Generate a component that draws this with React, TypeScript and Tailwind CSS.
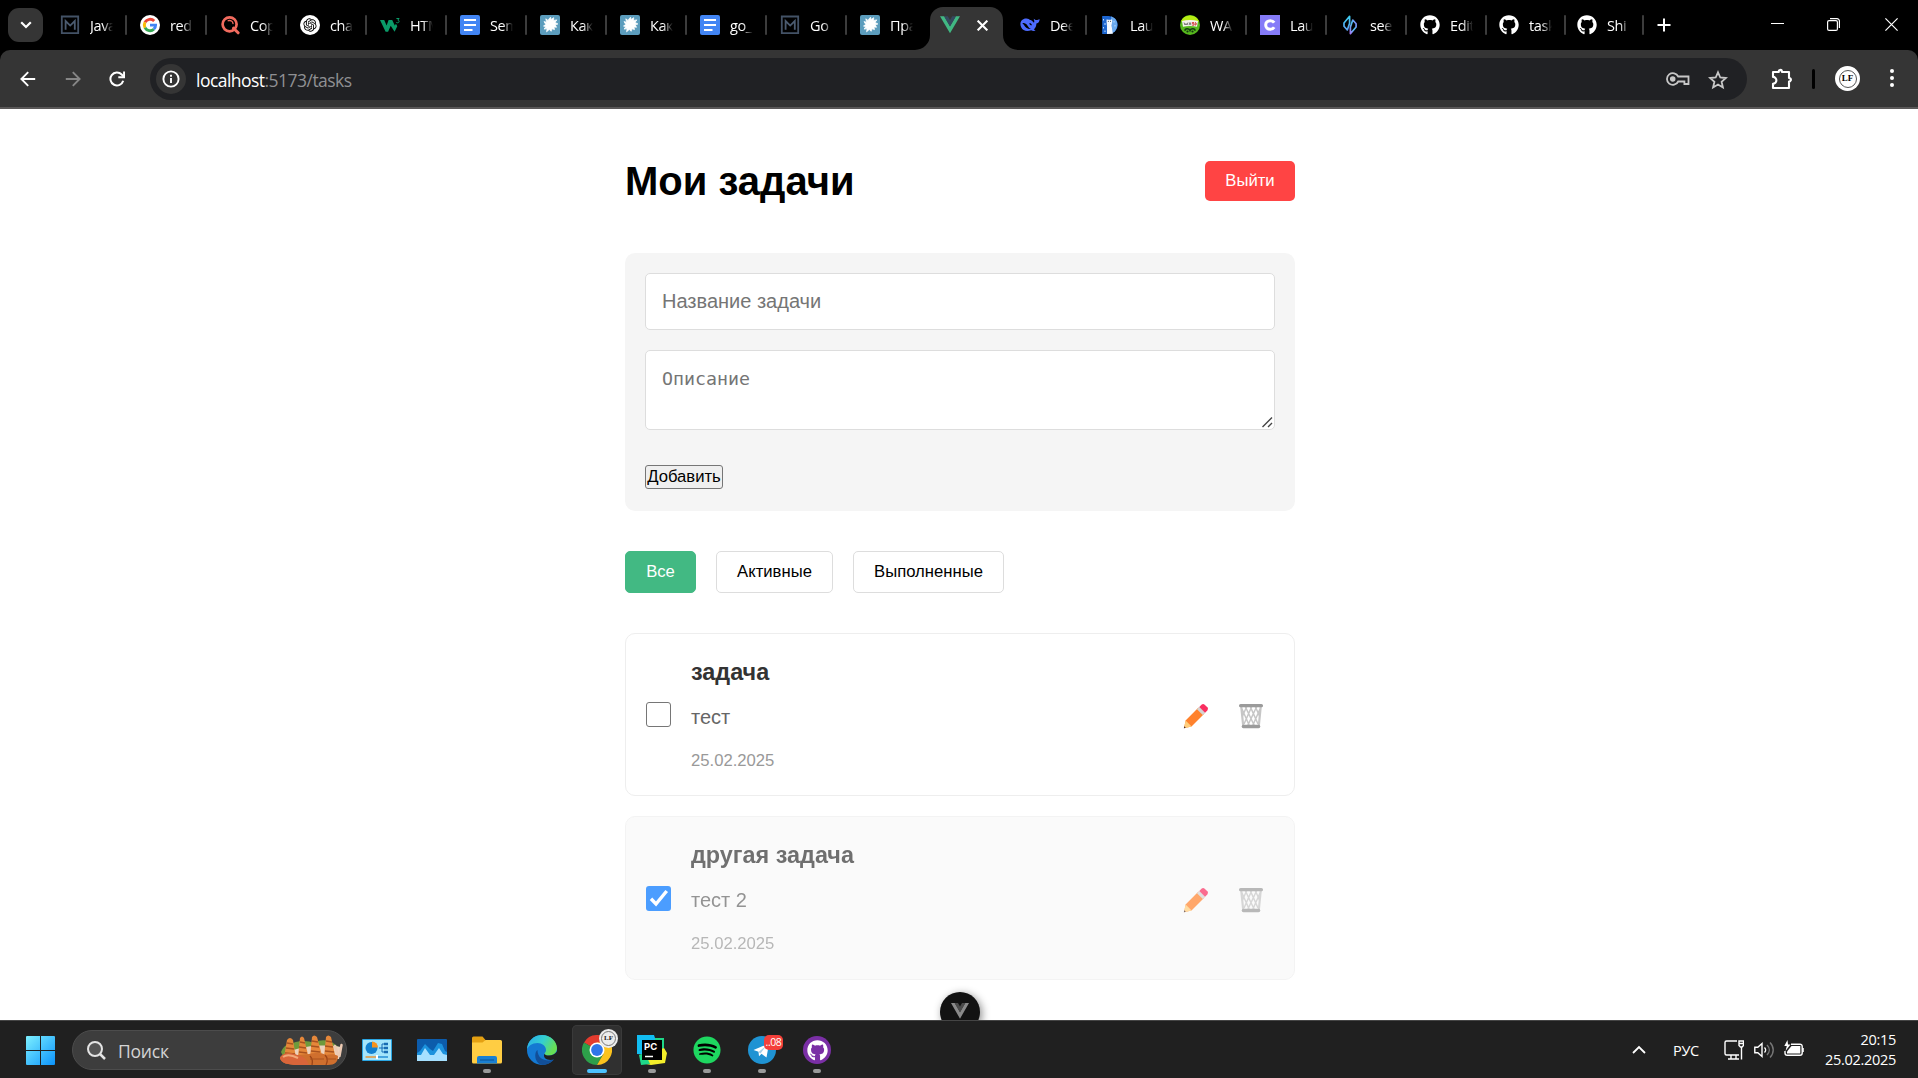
import React from 'react';
import { FaGithub, FaSpotify } from 'react-icons/fa';
import { RiOpenaiFill } from 'react-icons/ri';

function MIcon() {
  return (
    <svg viewBox="0 0 20 20" className="size-5">
      <path d="M1.8 1.5h16.4v16.7H1.8z" fill="none" stroke="#435266" strokeWidth="1.8" />
      <path d="M5.6 14.8V6l4.6 4.6L14.8 6v8.8" fill="none" stroke="#4b5b70" strokeWidth="1.8" />
    </svg>
  );
}

function GoogleIcon() {
  return (
    <svg viewBox="0 0 20 20" className="size-5">
      <circle cx="10" cy="10" r="10" fill="#fff" />
      <g fill="none" strokeWidth="2.9">
        <path d="M14.2 6.1A5.7 5.7 0 0 0 5 7.3" stroke="#ea4335" />
        <path d="M5 7.3a5.9 5.9 0 0 0 0 5.5" stroke="#fbbc05" />
        <path d="M5 12.8a5.7 5.7 0 0 0 8.8 1.4" stroke="#34a853" />
        <path d="M13.8 14.2a5.4 5.4 0 0 0 1.8-4.1H10" stroke="#4285f4" />
      </g>
    </svg>
  );
}

function CopyIcon() {
  return (
    <svg viewBox="0 0 20 20" className="size-5" fill="none" stroke="#f26b5e" strokeLinecap="round">
      <circle cx="9.6" cy="9.3" r="7" strokeWidth="2.7" />
      <path d="M13.5 13.2l4.6 4.6" strokeWidth="3" />
      <path d="M8.3 5.7c2.4-.8 4.5.6 4.7 2.8" strokeWidth="1.4" />
    </svg>
  );
}

function OpenAiIcon() {
  return (
    <span className="flex size-5 items-center justify-center rounded-full bg-white text-black">
      <RiOpenaiFill size={16} />
    </span>
  );
}

function W3Icon() {
  return (
    <svg viewBox="0 0 20 20" className="size-5">
      <path d="M0 5h4.2l2.4 5.4L8.600 5h3.600l2.600 5.600L16 8.800l1.300 2.400-2.700 5.600-3.900-6-2.600 6H5.600z" fill="#0a9b68" />
      <path d="M16.400 3.500h2.700l-1.300 1.600c1.800.1 1.700 2.700-.2 2.700-.8 0-1.200-.3-1.400-.8" fill="none" stroke="#0a9b68" strokeWidth="1" />
    </svg>
  );
}

function DocsIcon() {
  return (
    <svg viewBox="0 0 20 20" className="size-5">
      <rect width="20" height="20" rx="2" fill="#4285f4" />
      <path d="M4 5h12M4 10h12M4 15h8.5" stroke="#fff" strokeWidth="2.2" />
    </svg>
  );
}

function SplatIcon() {
  return (
    <svg viewBox="0 0 20 20" className="size-5">
      <rect width="20" height="20" rx="2" fill="#5c9dbd" />
      <path
        d="M9 4l1.500-1.800.6 2.300 2.600-1.800-.2 2.800 3.400-.6-1.900 2.500 2.900 1.600-2.700.7 1.300 2.600-2.600-.4.600 2.700-2.500-.9-.9 2.600-1.800-1.900-2.700 2.400.5-3.200-3 .5 1.700-2.400L3.500 11l2.300-1.500L4 6.600l2.600.6-.8-3.400L8 5.400z"
        fill="#fff"
        stroke="#fff"
        strokeWidth=".8"
      />
    </svg>
  );
}

function VueIcon() {
  return (
    <svg viewBox="0 0 20 20" className="size-5">
      <path d="M0 1.300h4.200L10 11.300 15.800 1.300H20L10 18.300z" fill="#41b883" />
      <path d="M4 1.300h3.800L10 5l2.200-3.700H16L10 11.600z" fill="#35495e" />
    </svg>
  );
}

function WhaleIcon() {
  return (
    <svg viewBox="0 0 20 20" className="size-5">
      <path
        d="M.4 9C.5 5.700 3.300 3.300 6.500 3.600c1.700.1 3 .9 3.400 1.300.9-.1 2 .4 3.200 2 .7.900 1.200 1 1.200-.1 0-1.300-.5-2-.5-3 .9.900 1.700 1.300 2.700 1.300 1.200-.1 1.900-.5 3-1.200.3 2.200-.8 4-3.100 4.600-.1 2.700-1 4.600-2.600 6 .8.400 1.500.5 1.700 1-1.200.8-3 .5-4.300-.2C6.700 16.900 2.700 15.700 1.300 12.500.7 11.300.4 10 .4 9z"
        fill="#4d6bfe"
      />
      <path d="M2.400 8.400c1.300-1 3.900.3 5.200 2.300 1 1.500 1.700 2.700 3.300 3.100-2.200.7-4.100-.3-5.400-1.700-1-1.100-1.500-2.700-3.100-3.700zM9.400 8c1.200-.2 2.400.9 2.600 2.300-.9-.1-1.700-.3-2.300-.9z" fill="#000" />
    </svg>
  );
}

function BearIcon() {
  return (
    <svg viewBox="0 0 20 20" className="size-5">
      <path d="M2.200 1h6.500a9 9 0 0 1 0 18H2.200z" fill="#1d66d0" />
      <path d="M11 1.600c4.200.9 6.400 4.500 6.300 8.400 0 3.500-1.800 6.700-4.800 8.100z" fill="#69a9ed" />
      <path d="M7 19v-7.500L6.500 6l.2-1.800 1.200.5h3l1.100-.5.2 2-.6 4.400 1.300 8.200z" fill="#f5f9ff" />
      <path d="M3.500 4v1.500M5 8v2M3.500 12v1.500M5 15.500V17M14 6v1.500M15 10v1.500" stroke="#bcdcff" />
      <circle cx="8.300" cy="6.300" r=".5" fill="#123" />
      <circle cx="10.500" cy="6.300" r=".5" fill="#123" />
    </svg>
  );
}

function WasdIcon() {
  return (
    <svg viewBox="0 0 20 20" className="size-5">
      <circle cx="10" cy="10" r="10" fill="#56b81d" />
      <path d="M.8 6.500A10 10 0 0 1 19.200 6.500z" fill="#b7ec13" />
      <path d="M2 6c5-1.200 11-1.200 16 0l-1 5.700c-4-.8-10-.8-14 0z" fill="#f5f3ee" />
      <path d="M4 7.500l1 2.500 1-1.500 1 1.500 1-2.500M9 10.200l1-2.700 1 2.700" fill="none" stroke="#555" strokeWidth=".8" />
      <path d="M14 7.500h-1.800v1.200H14v1.500h-2M15.200 7.500v2.700c1.600 0 1.600-2.700 0-2.700" fill="none" stroke="#c22" strokeWidth=".8" />
      <path d="M5 15.800c0-2.600 4-2.600 5-.3 1-2.300 5-2.300 5 .3" fill="none" stroke="#123b10" strokeWidth="1.600" />
      <circle cx="7.500" cy="16.500" r="1.100" fill="#143611" />
      <circle cx="12.500" cy="16.500" r="1.100" fill="#143611" />
    </svg>
  );
}

function CIcon() {
  return (
    <svg viewBox="0 0 20 20" className="size-5">
      <path d="M0 0h20v20H0z" fill="#857bf8" />
      <path d="M14.200 7.700C13.200 6.200 11.900 5.700 10.300 5.700c-2.800 0-4.600 1.700-4.600 4.300s1.800 4.300 4.600 4.300c1.600 0 3-.6 3.900-2" fill="none" stroke="#fff" strokeWidth="3" />
    </svg>
  );
}

function SeeIcon() {
  return (
    <svg viewBox="0 0 20 20" className="size-5" fill="none" strokeWidth="1.700" strokeLinejoin="round">
      <defs>
        <linearGradient id="see-left" x1="0" y1="0" x2="0" y2="1">
          <stop offset="0" stopColor="#3fd0f2" />
          <stop offset="1" stopColor="#5aa0f2" />
        </linearGradient>
        <linearGradient id="see-right" x1="1" y1="0" x2="0" y2="1">
          <stop offset="0" stopColor="#8f7bf7" />
          <stop offset=".5" stopColor="#4cc3ee" />
          <stop offset="1" stopColor="#a678f5" />
        </linearGradient>
      </defs>
      <path d="M9.600 1.300v7L7.300 15 4 11.300V8z" stroke="url(#see-left)" />
      <path d="M12.800 5l3.300 3.700V12l-5.700 6.700V12z" stroke="url(#see-right)" />
    </svg>
  );
}

const gh = <FaGithub size={20} color="#fff" />;

const leftTabs: [React.ReactNode, string][] = [
  [<MIcon />, 'Java'],
  [<GoogleIcon />, 'redi'],
  [<CopyIcon />, 'Copy'],
  [<OpenAiIcon />, 'chat'],
  [<W3Icon />, 'HTM'],
  [<DocsIcon />, 'Sem'],
  [<SplatIcon />, 'Как '],
  [<SplatIcon />, 'Как '],
  [<DocsIcon />, 'go_'],
  [<MIcon />, 'Go'],
  [<SplatIcon />, 'Пра'],
];

const rightTabs: [React.ReactNode, string, string][] = [
  [<WhaleIcon />, 'Dee', 'w-20'],
  [<BearIcon />, 'Lau', 'w-20'],
  [<WasdIcon />, 'WA', 'w-20'],
  [<CIcon />, 'Lau', 'w-20'],
  [<SeeIcon />, 'see', 'w-20'],
  [gh, 'Edit', 'w-[79px]'],
  [gh, 'task', 'w-[78px]'],
  [gh, 'Shi', 'w-[78px]'],
];

function Tab({ icon, label, width = 'w-20', line = true }: { icon: React.ReactNode; label: string; width?: string; line?: boolean }) {
  return (
    <div className={`flex h-[50px] shrink-0 items-center pl-2.5 ${width}`}>
      <div className="size-5 shrink-0">{icon}</div>
      <div className="ml-2.5 mt-px w-[23px] shrink-0 overflow-hidden whitespace-nowrap text-[14.5px] leading-5 tracking-[-0.4px] text-white [mask-image:linear-gradient(to_right,black_55%,transparent)]">
        {label}
      </div>
      {line && <div className="ml-3 h-5 w-0.5 shrink-0 rounded-full bg-[#3c3c3c]" />}
    </div>
  );
}

function TabStrip() {
  return (
    <div className="flex h-[50px] bg-black">
      <div className="ml-2 mt-2 mr-[7px] flex h-[34px] w-[35px] items-center justify-center rounded-[11px] bg-[#353535]">
        <svg viewBox="0 0 12 8" className="h-2 w-3" fill="none" stroke="#fff" strokeWidth="2.200">
          <path d="M1.200 1.200L6 6l4.800-4.800" />
        </svg>
      </div>
      {leftTabs.map(([icon, label], i) => (
        <Tab key={i} icon={icon} label={label} line={i < leftTabs.length - 1} />
      ))}
      <div className="relative mr-[7px] mt-[7px] flex h-[43px] w-[73px] rounded-t-[13px] bg-[#353535] pl-2.5 pt-2">
        <svg viewBox="0 0 15 15" className="absolute -left-[15px] bottom-0 size-[15px]">
          <path d="M15 0v15H0A15 15 0 0 0 15 0z" fill="#353535" />
        </svg>
        <svg viewBox="0 0 15 15" className="absolute -right-[15px] bottom-0 size-[15px]">
          <path d="M0 0v15h15A15 15 0 0 1 0 0z" fill="#353535" />
        </svg>
        <VueIcon />
        <svg viewBox="0 0 10 10" className="ml-[17px] mt-[4.5px] size-[11px]" stroke="#fff" strokeWidth="1.900">
          <path d="M.6.600l8.800 8.800M9.400.600L.6 9.400" />
        </svg>
      </div>
      {rightTabs.map(([icon, label, width], i) => (
        <Tab key={i} icon={icon} label={label} width={width} />
      ))}
      <svg viewBox="0 0 14 14" className="ml-3 mt-[18px] size-3.5" stroke="#fff" strokeWidth="2">
        <path d="M7 .5v13M.5 7h13" />
      </svg>
      <div className="ml-auto mr-5 mt-[18px] flex">
        <svg viewBox="0 0 13 13" className="mr-[43px] size-[13px]" stroke="#fff">
          <path d="M0 5.500h13" />
        </svg>
        <svg viewBox="0 0 13 13" className="mr-[45px] size-[13px]" fill="none" stroke="#fff" strokeWidth="1.200">
          <rect x=".6" y="2.600" width="9.800" height="9.800" rx="1.500" />
          <path d="M3 .6h7a2.400 2.400 0 0 1 2.400 2.400v7" />
        </svg>
        <svg viewBox="0 0 13 13" className="size-[13px]" stroke="#fff" strokeWidth="1.200">
          <path d="M.4.400l12.200 12.200M12.600.400L.4 12.600" />
        </svg>
      </div>
    </div>
  );
}

function Toolbar() {
  return (
    <div className="bg-black">
      <div className="flex h-[59px] items-start rounded-t-[10px] border-b-2 border-[#5a5858] bg-[#353535] pt-2">
        <svg viewBox="0 0 16 16" className="ml-5 mt-[13px] size-4" fill="none" stroke="#fff" strokeWidth="1.900">
          <path d="M15.200 8H1.800M8.200 1.200L1.400 8l6.800 6.800" />
        </svg>
        <svg viewBox="0 0 16 16" className="ml-[29px] mt-[13px] size-4" fill="none" stroke="#868686" strokeWidth="1.900">
          <path d="M.8 8h13.400M7.800 1.200L14.600 8l-6.800 6.800" />
        </svg>
        <svg viewBox="0 0 16 16" className="ml-[28px] mr-px mt-[12.5px] size-4" fill="none" stroke="#fff" strokeWidth="2">
          <path d="M14.200 9.700A6.500 6.500 0 1 1 12.700 3.500l2 2.200" />
          <path d="M15.100.5v5.800H9.300" />
        </svg>
        <div className="ml-6 flex h-[42px] w-[1597px] items-center rounded-full bg-[#202124] pl-1.5">
          <div className="flex size-[30px] items-center justify-center rounded-full bg-[#353535]">
            <svg viewBox="0 0 18 18" className="size-[18px]" fill="none" stroke="#fff" strokeWidth="1.900">
              <circle cx="9" cy="9" r="7.600" />
              <path d="M9 8v5M9 4.800v1.900" />
            </svg>
          </div>
          <div className="ml-[10px] mt-px text-[17.5px] leading-[24px] tracking-[-0.53px] text-[#8f9093]">
            <span className="text-white">localhost</span>:5173/tasks
          </div>
          <svg viewBox="0 0 24 14" className="ml-auto h-3.5 w-6" fill="none" stroke="#c7c7c7" strokeWidth="1.800">
            <path d="M12.200 4.500H22.500v7.500h-4.100V9.500h-6.200A5.900 5.900 0 1 1 12.200 4.500z" />
            <circle cx="6.700" cy="7" r="1.900" fill="#c7c7c7" />
          </svg>
          <svg viewBox="0 0 20 20" className="ml-[18px] mr-[19px] mt-px size-5" fill="none" stroke="#c7c7c7" strokeWidth="1.800">
            <path d="M10 2.300l2.300 5.200 5.600.5-4.300 3.800 1.300 5.600L10 14.500l-4.900 2.900 1.300-5.600L2.100 8l5.600-.5z" />
          </svg>
        </div>
        <svg viewBox="0 0 22 22" className="ml-6 mt-2.5 size-[22px]" fill="none" stroke="#fff" strokeWidth="2.100" strokeLinejoin="round">
          <path d="M2 4h5.800a1.600 1.600 0 0 1 3.200-.8V4H18v6a1.700 1.700 0 0 1 0 3.600V20H2v-4.300a3.400 3.400 0 0 0 0-6.800z" />
          <path d="M9.400 1.700v1.500M19.500 11.800h1" />
        </svg>
        <div className="ml-[19px] mt-[11px] h-5 w-[3px] rounded-full bg-black" />
        <div className="ml-[20px] mt-2 flex size-[25px] items-center justify-center rounded-full bg-white">
          <div className="flex size-[18px] items-center justify-center rounded-full border border-[#555] font-['Liberation_Serif',serif] text-[9px] font-bold leading-none text-black">LF</div>
        </div>
        <div className="ml-[30px] mt-[11px] flex flex-col gap-[3px]">
          <i className="size-1 rounded-full bg-white" />
          <i className="size-1 rounded-full bg-white" />
          <i className="size-1 rounded-full bg-white" />
        </div>
      </div>
    </div>
  );
}

function Pencil() {
  return (
    <svg viewBox="0 0 26 26" className="size-[26px]">
      <path d="M15.500 4.500L21.500 10.500 8.500 23.500 1 25.200 2.600 17.500z" fill="#ff822d" />
      <path d="M2.600 17.500l6 6L1 25.200z" fill="#ffce7c" />
      <path d="M1.300 23.300l1.500 1.500-2 .5z" fill="#402a32" />
      <path d="M14 6.200l2.500-2.500 5.800 5.800-2.500 2.500z" fill="#d3d3d3" />
      <path d="M16.300 3.900l2.200-2.200a2.300 2.300 0 0 1 3.200 0l2.600 2.600a2.300 2.300 0 0 1 0 3.200l-2.200 2.200z" fill="#f92f60" />
    </svg>
  );
}

function Basket() {
  return (
    <svg viewBox="0 0 24 26" className="h-[26px] w-6">
      <g fill="none" stroke="#c6c6c6" strokeWidth="1.500">
        <path d="M2.200 3l2 20M21.800 3l-2 20" strokeWidth="2.200" />
        <path d="M3 6l7.500 17M6 3l9.500 20M11 3l8 18M16 3l4.500 10M21 6l-7.500 17M18 3L8.500 23M13 3L5 21M8 3L3.500 13" />
      </g>
      <rect x="0" y="1" width="24" height="3.300" rx="1.600" fill="#9b9b9b" />
      <rect x="2.700" y="21.800" width="18.600" height="3.500" rx="1.700" fill="#9b9b9b" />
    </svg>
  );
}

function TaskCard({ title, text, date, done = false }: { title: string; text: string; date: string; done?: boolean }) {
  return (
    <div className={`flex items-center rounded-[10px] border border-[#eee] px-5 ${done ? 'h-[164px] bg-[#f9f9f9] opacity-70' : 'h-[163px]'}`}>
      {done ? (
        <div className="flex size-[25px] items-center justify-center rounded-[3px] bg-[#0075ff]">
          <svg viewBox="0 0 20 20" className="size-5" fill="none" stroke="#fff" strokeWidth="3.400">
            <path d="M2 10.800l5 5.200L17.700 3" />
          </svg>
        </div>
      ) : (
        <div className="size-[25px] rounded-[3px] border border-[#767676] bg-white" />
      )}
      <div className="ml-5 h-28">
        <h3 className="-mt-px text-[23.4px] font-bold leading-7 text-[#333]">{title}</h3>
        <p className="mt-[19px] text-[20px] leading-6 text-[#666]">{text}</p>
        <p className="mt-[22px] text-[16.67px] leading-5 text-[#999]">{date}</p>
      </div>
      <div className="ml-auto mr-[11px] mt-[3px] flex gap-[30px]">
        <Pencil />
        <Basket />
      </div>
    </div>
  );
}

function TasksPage() {
  return (
    <main className="flex h-[911px] flex-col items-center overflow-hidden bg-white font-['Liberation_Sans',Arial,sans-serif] text-black">
      <div className="ml-[2px] h-[871px] w-[670px] shrink-0">
        <div className="flex h-[144px] items-start justify-between pt-[49px]">
          <h1 className="text-[40px] font-bold leading-[46px]">Мои задачи</h1>
          <button className="mt-[3px] flex h-10 w-[90px] justify-center rounded-[5px] bg-[#ff4444] pt-[10px] text-[16.67px] leading-5 text-white">Выйти</button>
        </div>
        <div className="h-[258px] rounded-[10px] bg-[#f5f5f5] p-5">
          <div className="h-[57px] rounded-[5px] border border-[#ddd] bg-white px-4 pt-[15px] text-[20px] leading-6 text-[#757575]">Название задачи</div>
          <div className="mt-5 flex h-20 justify-between rounded-[5px] border border-[#ddd] bg-white pl-4 text-[#757575]">
            <div className="pt-4 font-['DejaVu_Sans_Mono',monospace] text-[18.27px] leading-6">Описание</div>
            <svg viewBox="0 0 12 12" className="mb-px mr-px size-3 self-end" stroke="#444" strokeWidth="1.400">
              <path d="M1.500 11L11 1.500M7 11l4-4" />
            </svg>
          </div>
          <button className="mt-[35px] flex h-6 w-[78px] justify-center rounded-[3px] border border-[#767676] bg-[#efefef] text-[16.67px] leading-[21px]">Добавить</button>
        </div>
        <div className="mt-10 flex h-[42px] gap-5 text-[16.67px] leading-10">
          <button className="flex w-[71px] justify-center rounded-[5px] border border-[#42b983] bg-[#42b983] text-white">Все</button>
          <button className="flex w-[117px] justify-center rounded-[5px] border border-[#ddd]">Активные</button>
          <button className="flex w-[151px] justify-center rounded-[5px] border border-[#ddd]">Выполненные</button>
        </div>
        <div className="mt-10 flex flex-col gap-5">
          <TaskCard title="задача" text="тест" date="25.02.2025" />
          <TaskCard title="другая задача" text="тест 2" date="25.02.2025" done />
        </div>
      </div>
      <div className="ml-[2px] mt-3 flex size-10 shrink-0 justify-center rounded-full bg-[#121212] pt-[11px] shadow-[2px_2px_8px_rgba(0,0,0,0.45)]">
        <svg viewBox="0 0 18 16" className="h-4 w-[18px]">
          <path d="M0 0h3.800L9 9l5.200-9H18L9 15.700z" fill="#8a8a8a" />
          <path d="M3.600 0H7l2 3.400L11 0h3.400L9 9.400z" fill="#4b4b4b" />
        </svg>
      </div>
    </main>
  );
}

const spires = [
  'M5 22L8 5Q11 1 14 5L17 23z',
  'M19 22L21 3Q23 0 25 3L30 24H19z',
  'M31 22L33 2Q35-1 38 2L44 24H31z',
  'M45 22L47 2Q49-1 52 2L57 24H44z',
];

const bands = [
  'M8 8l6 1M7 13l8 1M6 18l10 1',
  'M21 7l5 1M20 12l7 1M20 17l8 1',
  'M33 6l6 1M32 11l8 1M32 16l9 1',
  'M47 6l6 1M46 11l8 1M46 16l9 1',
];

function Croissants() {
  return (
    <svg viewBox="0 0 64 31" className="h-[31px] w-16">
      <path d="M2 17c2-5 6-9 12-9 8-3 16-2 21 0 7-4 14-3 19 0l7 5-2 10H5z" fill="#6f9a3c" />
      <path d="M12 16c12-5 33-7 50-4l-2 12H12z" fill="#ecd2bd" />
      <path d="M62.500 10l-2 11M56 11l3 9" stroke="#eccab3" strokeWidth="2.500" strokeLinecap="round" />
      {spires.map((d, i) => (
        <g key={i}>
          <path d={d} fill="#e5873a" />
          <path d={bands[i]} stroke="#a8521f" strokeWidth="1.400" />
        </g>
      ))}
      <path d="M1 23c2-5 10-6 17-3l12-1c8-2 14-1 17 1 5-1 9-1 12 1 0 6-3 9-10 9H19C9 30 2 28 1 23z" fill="#cf6f2e" />
      <path d="M1 23c2-5 10-6 17-3 6 1 11 5 12 10H19C9 30 2 28 1 23z" fill="#d9653a" />
      <path d="M4 22c4-3 9-2 15 1" stroke="#f2a878" strokeWidth="2" fill="none" />
      <path d="M31 21c2 2 3 5 2 9M46 20c2 2 3 6 1 10" stroke="#9c4417" strokeWidth="1.300" fill="none" />
      <path d="M31 24h14M47 24h10" stroke="#a8521f" />
    </svg>
  );
}

function ChromeIcon() {
  return (
    <svg viewBox="0 0 30 30" className="size-[30px]">
      <path d="M15 15L2 7.500A15 15 0 0 1 28 7.500z" fill="#e33b2e" />
      <path d="M15 15l6.500 3.800L15 30A15 15 0 0 1 2 7.500z" fill="#2da04a" />
      <path d="M15 15V7.500h13A15 15 0 0 1 15 30l6.500-11.200z" fill="#fcc31e" />
      <circle cx="15" cy="15" r="7.500" fill="#fff" />
      <circle cx="15" cy="15" r="5.900" fill="#2f75e8" />
    </svg>
  );
}

function AppSlot({ children, open = false, active = false }: { children: React.ReactNode; open?: boolean; active?: boolean }) {
  return (
    <div className={`flex h-[50px] w-[50px] shrink-0 flex-col items-center rounded-[5px] ${active ? 'bg-[#303030] shadow-[inset_0_0_0_1px_#3a3a3a]' : ''}`}>
      <div className="relative mt-2.5 flex size-[30px] items-center justify-center">{children}</div>
      {open && <div className={`mt-1 h-1 rounded-full ${active ? 'w-5 bg-[#4cc2ff]' : 'w-2 bg-[#9a9a9a]'}`} />}
    </div>
  );
}

function Taskbar() {
  return (
    <div className="flex h-[58px] items-start border-t border-[#454545] bg-[#202020] text-white">
      <svg viewBox="0 0 29 29" className="ml-[26px] mt-[15px] size-[29px]">
        <defs>
          <linearGradient id="win" x1="0" y1="0" x2="1" y2="1">
            <stop offset="0" stopColor="#7df0ff" />
            <stop offset="1" stopColor="#0c93fb" />
          </linearGradient>
        </defs>
        <path d="M1 0h13v14H0V1a1 1 0 0 1 1-1zM15 0h13a1 1 0 0 1 1 1v13H15zM0 15h14v14H1a1 1 0 0 1-1-1zM15 15h14v13a1 1 0 0 1-1 1H15z" fill="url(#win)" />
      </svg>
      <div className="ml-[17px] mt-[9px] flex h-10 w-[275px] items-center rounded-full border border-[#4c4c4c] bg-[#3d3d3d] pl-3.5">
        <svg viewBox="0 0 19 19" className="size-[19px]" fill="none" stroke="#e4e4e4" strokeWidth="2">
          <circle cx="8" cy="8" r="7" fill="#555" />
          <path d="M13 13l5 5" strokeWidth="2.500" />
        </svg>
        <div className="ml-3 mt-px text-[17.5px] leading-6 tracking-[-0.2px] text-[#d4d4d4]">Поиск</div>
        <div className="ml-auto mr-[3px]"><Croissants /></div>
      </div>
      <div className="ml-[5px] mt-1 flex gap-[5px]">
        <AppSlot>
          <svg viewBox="0 0 30 22" className="h-[22px] w-[30px]">
            <rect width="30" height="22" rx="1" fill="#2aa5e2" />
            <rect x="1" y="1" width="28" height="20" fill="#a5e5fb" />
            <circle cx="9.500" cy="9" r="6" fill="#1280cf" />
            <path d="M10 8.500V2.500a6 6 0 0 1 6 6z" fill="#f7931e" />
            <path d="M17 9h5M20 5v8M20 5h4M20 13h4" stroke="#176bb3" />
            <path d="M22 5h4M22 9h4M22 13h4" stroke="#176bb3" strokeWidth="2.500" />
            <path d="M3.500 18H14" stroke="#f08a1d" strokeWidth="1.300" />
            <path d="M16 18h10" stroke="#1280cf" strokeWidth="1.300" />
            <path d="M15 16v4" stroke="#fff" strokeWidth="2" />
          </svg>
        </AppSlot>
        <AppSlot>
          <svg viewBox="0 0 30 22" className="h-[22px] w-[30px]">
            <rect width="30" height="22" rx="1" fill="#0c5cac" />
            <path d="M0 14l3-2 5-7 5 5 3 2 5-8 4 1 3 7 2 1v9H0z" fill="#1c92dd" />
            <path d="M0 16h4l4-7 5 7h4l5-7 4 6 4 1v6H0z" fill="#a6e0ff" />
          </svg>
        </AppSlot>
        <AppSlot open>
          <svg viewBox="0 0 30 28" className="h-7 w-[30px]">
            <path d="M0 2a1.500 1.500 0 0 1 1.500-1.500h9L13.500 4v5H0z" fill="#e4a012" />
            <path d="M0 6.500h10.500L13.500 4H28.500a1.500 1.500 0 0 1 1.500 1.500V26a1.500 1.500 0 0 1-1.500 1.500h-27A1.500 1.500 0 0 1 0 26z" fill="#ffcd43" />
            <path d="M5 27.500V22a2 2 0 0 1 2-2h16a2 2 0 0 1 2 2v5.500z" fill="#1a80d2" />
            <path d="M8 24h14" stroke="#0b5294" />
          </svg>
        </AppSlot>
        <AppSlot>
          <svg viewBox="0 0 30 30" className="size-[30px]">
            <defs>
              <linearGradient id="edge" x1="0" y1="0" x2="1" y2=".4">
                <stop offset="0" stopColor="#28a9ec" />
                <stop offset=".55" stopColor="#34cfd0" />
                <stop offset="1" stopColor="#67df55" />
              </linearGradient>
            </defs>
            <circle cx="15" cy="15" r="15" fill="#1479d2" />
            <path d="M0 15C0 6 7 0 15 0c9 0 15 7 15 13 0 5-4 7.500-8 7.500-3 0-4.500-1-4.500-1.800 0-.9 1.500-1.500 1.500-3.700C19 11 15 8 10.500 8 5 8 1 11 0 15z" fill="url(#edge)" />
            <path d="M10.500 15c0 7 5 10.500 11 10.500 2.500 0 5-1 6-2C25 27.500 20 30 16 30 7 29 7 17 10.500 15z" fill="#124f98" />
            <path d="M17.500 18.700c0 .8 1.500 1.800 4.500 1.800 3 0 6-1.300 8-4v5l-2 2.500c-6 2.500-13-.5-10.500-5.300z" fill="#202020" />
          </svg>
        </AppSlot>
        <AppSlot open active>
          <ChromeIcon />
          <div className="absolute -right-[6px] -top-[6px] flex size-[19px] items-center justify-center rounded-full bg-[#ececec]">
            <div className="flex size-[15px] items-center justify-center rounded-full border border-[#777] font-['Liberation_Serif',serif] text-[7px] font-bold leading-none text-[#222]">LF</div>
          </div>
        </AppSlot>
        <AppSlot open>
          <svg viewBox="0 0 30 30" className="size-[30px]">
            <path d="M0 0h17l1 3h9v9L12 20l-12-1z" fill="#12bdf2" />
            <path d="M18 3h9v10l-8 7z" fill="#1fd789" />
            <path d="M27 13l3 5-2 10-14 2-10-2 6-9z" fill="#f4ee2a" />
            <path d="M2 20l6-2 5 11-9 1z" fill="#1fd789" />
            <path d="M5 5h20v20H5z" fill="#000" />
            <path d="M8 21.500h8" stroke="#fff" strokeWidth="1.500" />
          </svg>
          <div className="absolute left-[7px] top-[6px] font-['Inter',sans-serif] text-[9.5px] font-bold leading-3 text-white">PC</div>
        </AppSlot>
        <AppSlot open>
          <span className="flex size-6 items-center justify-center rounded-full bg-black"><FaSpotify size={28} color="#1ed760" className="shrink-0" /></span>
        </AppSlot>
        <AppSlot open>
          <svg viewBox="0 0 28 28" className="size-7">
            <circle cx="14" cy="14" r="14" fill="#1f93d3" />
            <path d="M5.500 14L21 7.500l-2.500 14-5-3.700-2.500 2.500-.5-4.500z" fill="#fff" />
            <path d="M10.500 16l7.500-6-5.500 7.500" fill="#a9cfe6" />
          </svg>
          <div className="absolute -right-[6px] top-0 flex h-[15px] w-[19px] items-center justify-center rounded-[5px] bg-[#f43f3a] text-[10.5px] leading-none tracking-[-0.4px]">..08</div>
        </AppSlot>
        <AppSlot open>
          <span className="flex size-7 items-center justify-center rounded-full bg-[#7a2fa5]"><FaGithub size={21} color="#fff" /></span>
        </AppSlot>
      </div>
      <svg viewBox="0 0 14 9" className="ml-auto mt-6 h-[9px] w-3.5" fill="none" stroke="#fff" strokeWidth="1.800">
        <path d="M1 8l6-6 6 6" />
      </svg>
      <div className="ml-[27px] mt-5 w-[27px] text-[14.5px] leading-5 tracking-[-0.3px]">РУС</div>
      <svg viewBox="0 0 20 20" className="ml-6 mt-[19px] size-5" fill="none" stroke="#fff" strokeWidth="1.400">
        <path d="M13 1H2.500A1.500 1.500 0 0 0 1 2.500v11A1.500 1.500 0 0 0 2.500 15H15M4 19h11M7 15v4M12 15v4M17.500 7v12.500" />
        <path d="M15 1h4.500v4.500L18 7h-1.500L15 5.500zM15 3.500h4.500" />
      </svg>
      <svg viewBox="0 0 20 18" className="ml-[10px] mt-[20px] h-[18px] w-5" fill="none" stroke="#fff" strokeWidth="1.400">
        <path d="M.8 6.200h3L8 2.500v13l-4.200-3.700h-3zM10.500 6.500c1.500 1.500 1.500 3.500 0 5" />
        <path d="M13 4c3 3 3 7 0 10M16 1.500c4.300 4.500 4.300 10.500 0 15" stroke="#777" />
      </svg>
      <svg viewBox="0 0 20 18" className="ml-[10px] mt-[19px] h-[18px] w-5">
        <path d="M7 4.200h9a2.200 2.200 0 0 1 2.200 2.200v6.700a2.200 2.200 0 0 1-2.200 2.200H3.200A2.200 2.200 0 0 1 1 13.100V11" fill="none" stroke="#fff" strokeWidth="1.400" />
        <path d="M7.500 6h8.800v7.500H3v-2z" fill="#fff" />
        <path d="M3.500 0L.3 6h2.500L1.500 11l5-6.500H4z" fill="#fff" />
        <path d="M18.200 8h1.600v4h-1.600z" fill="#fff" />
      </svg>
      <div className="mr-[22px] mt-[9px] w-[92px] text-right text-[14.5px] leading-5 tracking-[-0.3px]">
        <div>20:15</div>
        <div>25.02.2025</div>
      </div>
    </div>
  );
}

export default function App() {
  return (
    <div className="h-[1078px] w-[1918px] overflow-hidden bg-white font-['Open_Sans','Noto_Sans',sans-serif]">
      <TabStrip />
      <Toolbar />
      <TasksPage />
      <Taskbar />
    </div>
  );
}
